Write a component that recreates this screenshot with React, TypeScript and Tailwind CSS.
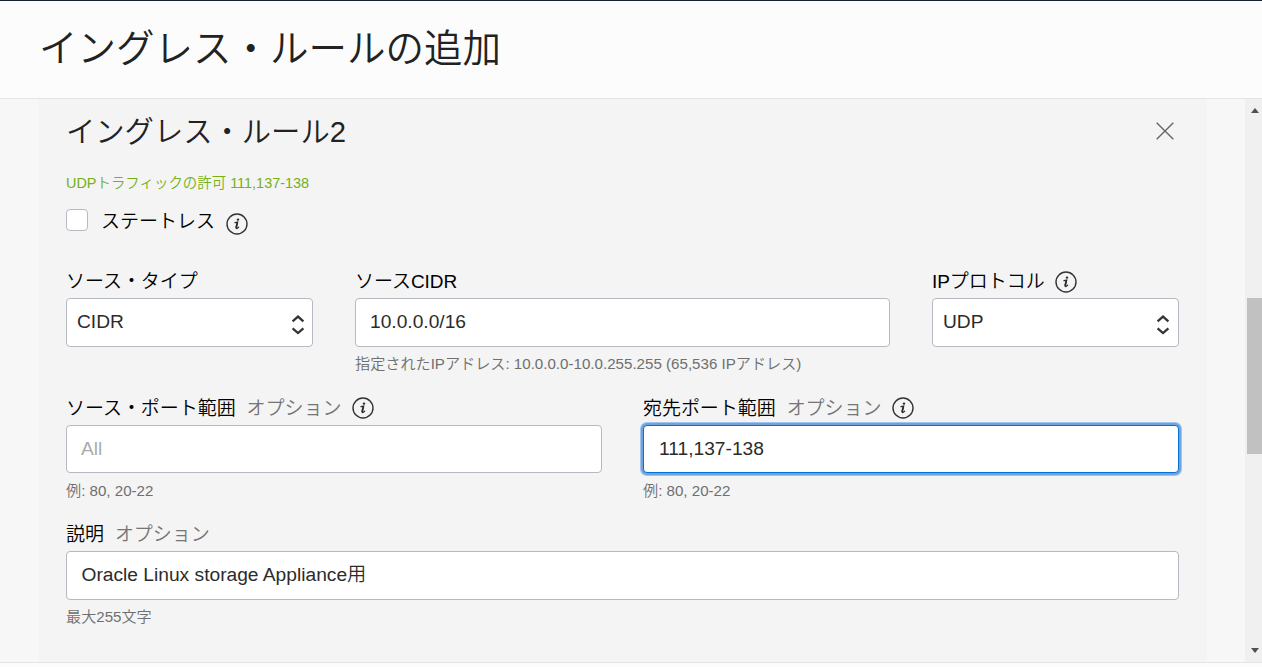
import type { ReactNode } from "react";

function InfoIcon({ className = "" }: { className?: string }) {
  return (
    <svg className={`h-[22px] w-[22px] shrink-0 ${className}`} viewBox="0 0 22 22" fill="none">
      <circle cx="11" cy="11" r="10" stroke="#333" strokeWidth="1.4" />
      <circle cx="12" cy="6.6" r="1.2" fill="#2b2b2b" />
      <path d="M9 9.6 L11.6 9.1 L10.2 14.4 Q9.9 15.8 11 15.4 L12.6 14.2" stroke="#2b2b2b" strokeWidth="1.3" strokeLinecap="round" />
      <path d="M11.4 9.4 L10.1 14.8" stroke="#2b2b2b" strokeWidth="1.7" />
    </svg>
  );
}

function SelectArrows() {
  return (
    <svg className="h-[22px] w-[14px] shrink-0" viewBox="0 0 14 22" fill="none" stroke="#333" strokeWidth="2.3">
      <path d="M1.6 7.3 L7 2.6 L12.4 7.3" />
      <path d="M1.6 14.3 L7 19 L12.4 14.3" />
    </svg>
  );
}

function Label({ children, optional, info }: { children: ReactNode; optional?: boolean; info?: boolean }) {
  return (
    <div className="flex h-[34px] items-center whitespace-nowrap text-[19px] leading-[34px] tracking-[-0.05px] text-black">
      <span className="pt-[2px]">{children}</span>
      {optional && <span className="ml-[11px] pt-[2px] text-[#757575]">オプション</span>}
      {info && <InfoIcon className={optional ? "ml-[11px]" : "mt-px ml-[10px]"} />}
    </div>
  );
}

function Help({ children }: { children: ReactNode }) {
  return <p className="h-[34px] whitespace-nowrap text-[15.13px] leading-[34px] text-[#6f6f6f]">{children}</p>;
}

function Select({ value, className }: { value: string; className: string }) {
  return (
    <div className={`flex h-[49px] items-center justify-between rounded-[4px] border border-[#b4b9c2] bg-white pl-[10px] text-[19.2px] text-[#2b2b2b] ${className}`}>
      <span>{value}</span>
      <div className="pt-[4px]"><SelectArrows /></div>
    </div>
  );
}

export default function App() {
  return (
    <div className="flex h-[667px] w-[1262px] flex-col overflow-hidden border-t border-[#18212f] bg-[#fcfcfc] font-['Liberation_Sans','Noto_Sans_CJK_JP',sans-serif] font-[350]">
      <header className="flex h-[98px] shrink-0 items-center border-b border-[#e4e4e4] pl-[39px]">
        <h1 className="text-[38.5px] leading-none font-[350] text-[#222]">イングレス・ルールの追加</h1>
      </header>
      <div className="flex h-[564px] shrink-0 border-b border-[#e4e4e4] bg-[#f7f7f7]">
        <main className="ml-[39px] w-[1168px] bg-[#f4f4f4] pr-[28px] pl-[27px]">
          <div className="flex h-16 items-center justify-between">
            <h2 className="pt-px text-[29.3px] leading-none font-[350] text-[#222]">イングレス・ルール2</h2>
            <svg className="mr-[5px] h-[18px] w-[18px]" viewBox="0 0 18 18" stroke="#666" strokeWidth="1.4">
              <path d="M0.7 0.7 L17.3 17.3 M17.3 0.7 L0.7 17.3" />
            </svg>
          </div>
          <p className="h-10 text-[14.45px] leading-10 text-[#76b015]">UDPトラフィックの許可 111,137-138</p>
          <div className="flex h-9 items-center">
            <span className="mb-[2px] h-[22px] w-[22px] rounded-[4px] border border-[#b4b9c2] bg-white" />
            <span className="ml-[13px] pt-[2px] text-[19px] leading-9 text-black">ステートレス</span>
            <InfoIcon className="mt-[5px] ml-[11px]" />
          </div>
          <div className="mt-[25px] grid grid-cols-[247px_535px_247px] gap-x-[42px]">
            <div>
              <Label>ソース・タイプ</Label>
              <Select value="CIDR" className="pr-[7px]" />
            </div>
            <div>
              <Label>ソースCIDR</Label>
              <div className="flex h-[49px] items-center rounded-[4px] border border-[#b4b9c2] bg-white pb-px pl-[14px] text-[19.2px] text-[#2b2b2b]">10.0.0.0/16</div>
              <Help>指定されたIPアドレス: 10.0.0.0-10.0.255.255 (65,536 IPアドレス)</Help>
            </div>
            <div>
              <Label info>IPプロトコル</Label>
              <Select value="UDP" className="pr-[8px]" />
            </div>
          </div>
          <div className="mt-[10px] grid grid-cols-[536px_536px] gap-x-[41px]">
            <div>
              <Label optional info>ソース・ポート範囲</Label>
              <div className="flex h-[48px] items-center rounded-[4px] border border-[#b4b9c2] bg-white pl-[14px] text-[19.2px] text-[#aaa]">All</div>
              <div className="pt-px"><Help>例: 80, 20-22</Help></div>
            </div>
            <div>
              <Label optional info>宛先ポート範囲</Label>
              <div className="flex h-[48px] items-center rounded-[4px] border border-[#0572ce] bg-white pl-[15px] text-[19.2px] text-[#2b2b2b] shadow-[0_0_0_2px_#6ea3df,0_0_0_3px_#a3c4ea]">111,137-138</div>
              <div className="pt-px"><Help>例: 80, 20-22</Help></div>
            </div>
          </div>
          <div className="mt-[9px]">
            <Label optional>説明</Label>
            <div className="flex h-[49px] items-center rounded-[4px] border border-[#b4b9c2] bg-white pl-[14.5px] text-[19.2px] text-[#2b2b2b]">Oracle Linux storage Appliance用</div>
            <Help>最大255文字</Help>
          </div>
        </main>
        <div className="ml-auto flex w-[17px] flex-col bg-[#f0f0f0] pl-[2px]">
          <svg className="mt-[9px] ml-[4px] h-[5px] w-[8px]" viewBox="0 0 8 5"><path d="M0 5 L4 0 L8 5Z" fill="#505050" /></svg>
          <div className="mt-[185px] h-[156px] w-[15px] bg-[#c1c1c1]" />
          <svg className="mt-auto mb-[9px] ml-[4px] h-[5px] w-[8px]" viewBox="0 0 8 5"><path d="M0 0 L4 5 L8 0Z" fill="#505050" /></svg>
        </div>
      </div>
    </div>
  );
}
